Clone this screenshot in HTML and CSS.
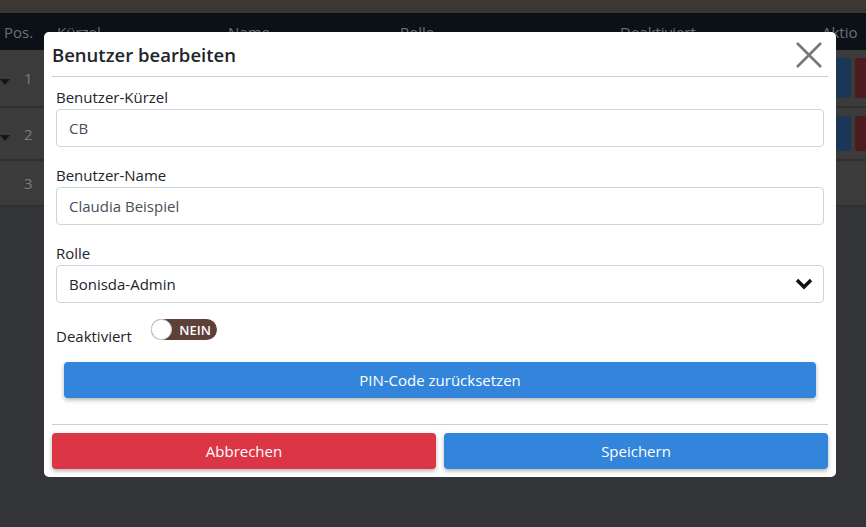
FILE: index.html
```html
<!DOCTYPE html>
<html lang="de">
  <head>
    <meta charset="UTF-8" />
    <meta name="viewport" content="width=device-width, initial-scale=1.0" />
    <title>Benutzer bearbeiten</title>
    <link rel="stylesheet" href="styles.css">
  </head>
  <body>
    <div class="page">
      <div class="topbar"></div>
      <div class="table">
        <div class="thead">
          <span>Pos.</span>
          <span>Kürzel</span>
          <span>Name</span>
          <span>Rolle</span>
          <span>Deaktiviert</span>
          <span>Aktio</span>
        </div>
        <div class="trow row-1">
          <span class="cell-pos"><span class="caret"></span><span>1</span></span>
          <span class="actions"><i class="act-edit"></i><i class="act-del"></i></span>
        </div>
        <div class="trow row-2">
          <span class="cell-pos"><span class="caret"></span><span>2</span></span>
          <span class="actions"><i class="act-edit"></i><i class="act-del"></i></span>
        </div>
        <div class="trow row-3">
          <span class="cell-pos"><span class="caret none"></span><span>3</span></span>
        </div>
      </div>
    </div>

    <div class="modal">
      <div class="modal-header">
        <h2>Benutzer bearbeiten</h2>
        <svg class="close" width="26" height="26" viewBox="0 0 26 26">
          <path d="M1 1 L25 25 M25 1 L1 25" stroke="#777" stroke-width="2.6" fill="none" />
        </svg>
      </div>
      <div class="modal-body">
        <label class="label">Benutzer-Kürzel</label>
        <div class="input">CB</div>

        <label class="label">Benutzer-Name</label>
        <div class="input">Claudia Beispiel</div>

        <label class="label">Rolle</label>
        <div class="input select">
          <span>Bonisda-Admin</span>
          <svg width="18" height="12" viewBox="0 0 18 12">
            <path d="M2 2 L9 9 L16 2" stroke="#111" stroke-width="3.4" fill="none" />
          </svg>
        </div>

        <div class="switch-row">
          <span class="label-inline">Deaktiviert</span>
          <span class="switch"><span class="knob"></span><span class="switch-text">NEIN</span></span>
        </div>

        <button class="btn btn-blue btn-pin">PIN-Code zurücksetzen</button>
      </div>
      <div class="modal-footer">
        <button class="btn btn-red">Abbrechen</button>
        <button class="btn btn-blue">Speichern</button>
      </div>
    </div>
  </body>
</html>
```

FILE: styles.css
```css
* {
  box-sizing: border-box;
}
html,
body {
  margin: 0;
  height: 100%;
}
body {
  background-color: #333539;
  font-family: "Open Sans", "Noto Sans", sans-serif;
  overflow: hidden;
}
.topbar {
  height: 13px;
  background-color: #3b3734;
}
.thead,
.trow {
  display: grid;
  grid-template-columns: 53px 171px 172px 220px 202px 1fr;
  padding-left: 4px;
  font-size: 15px;
}
.thead {
  height: 37px;
  align-items: center;
  background-color: #0b1116;
  color: #6a7178;
}
.trow {
  background-color: #3b3b3b;
  border-bottom: 2px solid #2f2f2f;
  color: #7c7c7c;
}
.row-1 {
  height: 58px;
}
.row-2 {
  height: 53px;
}
.row-3 {
  height: 46px;
}
.cell-pos {
  display: flex;
  align-items: center;
  margin-left: -4px;
}
.caret {
  width: 0;
  height: 0;
  margin-right: 14px;
  margin-top: 8px;
  border-left: 5px solid transparent;
  border-right: 5px solid transparent;
  border-top: 6px solid #151515;
}
.caret.none {
  border-top-color: transparent;
}
.actions {
  grid-column: 6;
  display: flex;
  gap: 4px;
  padding: 8px 0 8px 4px;
}
.actions i {
  display: block;
  width: 25px;
  border-radius: 3px;
}
.act-edit {
  background-color: #1a3757;
}
.act-del {
  background-color: #4b1b20;
}

/* modal */
.modal {
  position: absolute;
  left: 44px;
  top: 32px;
  width: 792px;
  background-color: #fff;
  border-radius: 5px;
  color: #212529;
}
.modal-header {
  display: flex;
  align-items: center;
  justify-content: space-between;
  margin: 0 8px;
  height: 45px;
  border-bottom: 1px solid #cfcfcf;
}
.modal-header h2 {
  margin: 0;
  font-size: 18.5px;
  font-weight: 600;
  color: #212529;
}
.close {
  margin-right: 6px;
  margin-top: 2px;
}
.modal-body {
  padding: 9px 12px 26px;
}
.label {
  display: block;
  font-size: 15px;
  line-height: 22px;
  margin-bottom: 1px;
}
.input {
  height: 38px;
  border: 1px solid #ced4da;
  border-radius: 4px;
  padding: 0 12px;
  display: flex;
  align-items: center;
  font-size: 15px;
  color: #495057;
  margin-bottom: 17px;
}
.select {
  justify-content: space-between;
  color: #212529;
  padding-right: 10px;
  margin-bottom: 16px;
}
.switch-row {
  display: flex;
  align-items: center;
  gap: 19px;
  height: 28px;
  margin-bottom: 15px;
}
.label-inline {
  font-size: 15px;
  margin-top: 5px;
}
.switch {
  position: relative;
  width: 66px;
  height: 21px;
  border-radius: 11px;
  background-color: #5d4037;
  display: flex;
  align-items: center;
  justify-content: flex-end;
  padding-right: 6px;
  margin-top: -7px;
}
.knob {
  position: absolute;
  left: 0;
  top: 0;
  width: 21px;
  height: 21px;
  border-radius: 50%;
  background-color: #fff;
  border: 1px solid #d8d8d8;
}
.switch-text {
  color: #fff;
  font-size: 13px;
  font-weight: 600;
}
.btn {
  display: block;
  border: none;
  border-radius: 4px;
  height: 36px;
  color: #fff;
  font-family: "Open Sans", "Noto Sans", sans-serif;
  font-size: 15px;
  box-shadow: 0 2px 4px rgba(0, 0, 0, 0.3);
}
.btn-blue {
  background-color: #3385db;
}
.btn-red {
  background-color: #dc3545;
}
.btn-pin {
  width: 752px;
  margin: 0 8px;
}
.modal-footer {
  display: flex;
  gap: 8px;
  margin: 0 8px;
  padding: 8px 0;
  border-top: 1px solid #cfcfcf;
}
.modal-footer .btn {
  flex: 1;
}
```
